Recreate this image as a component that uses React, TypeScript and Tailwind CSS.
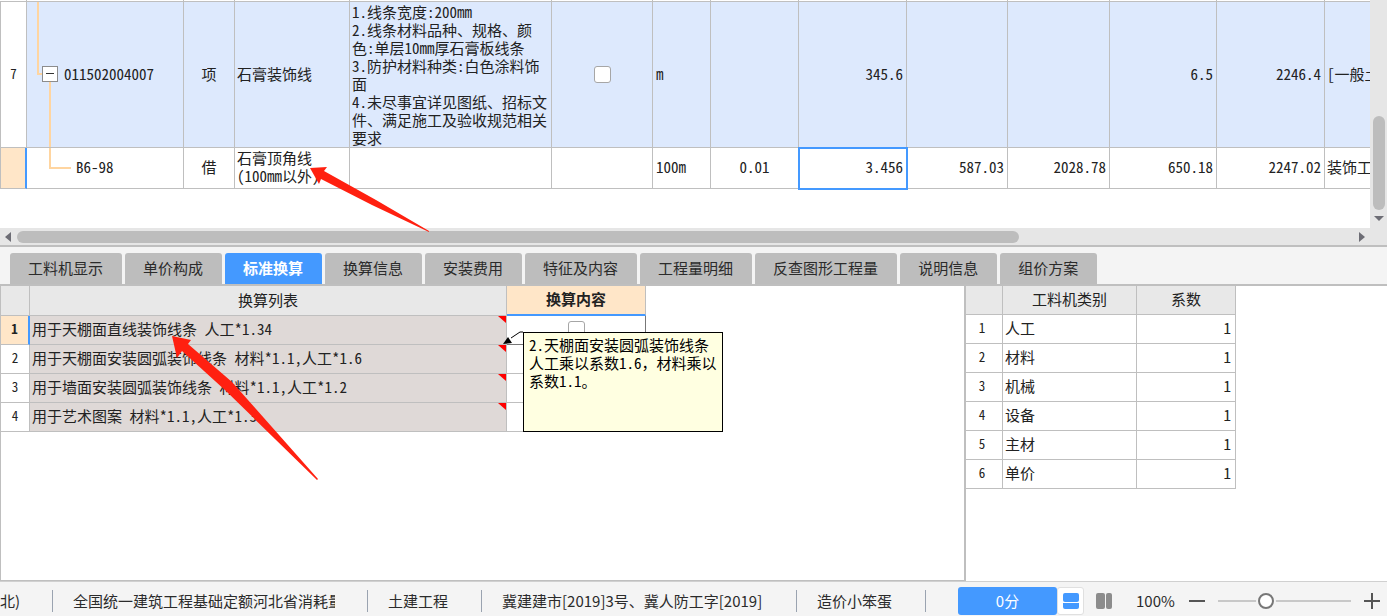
import React from "react";

const GRID_FONT = "font-['Noto_Sans_Mono_CJK_SC','Noto_Sans_CJK_SC',monospace]";
const UI_FONT = "font-['Noto_Sans_CJK_SC',sans-serif]";

const description = [
  "1.线条宽度:200mm",
  "2.线条材料品种、规格、颜",
  "色:单层10mm厚石膏板线条",
  "3.防护材料种类:白色涂料饰",
  "面",
  "4.未尽事宜详见图纸、招标文",
  "件、满足施工及验收规范相关",
  "要求",
];

const columnWidths = [27, 157, 51, 115, 202, 101, 58, 88, 108, 101, 102, 107, 108, 120];

const tabs = [
  "工料机显示",
  "单价构成",
  "标准换算",
  "换算信息",
  "安装费用",
  "特征及内容",
  "工程量明细",
  "反查图形工程量",
  "说明信息",
  "组价方案",
];

const conversions = [
  "用于天棚面直线装饰线条 人工*1.34",
  "用于天棚面安装圆弧装饰线条 材料*1.1,人工*1.6",
  "用于墙面安装圆弧装饰线条 材料*1.1,人工*1.2",
  "用于艺术图案 材料*1.1,人工*1.3",
];

const categories = ["人工", "材料", "机械", "设备", "主材", "单价"];

const frame = "border-b border-r border-[#bfbfbf] p-0";
const cell = `${frame} pb-[2px]`;

const QuotaTable: React.FC = () => (
  <table className="w-max table-fixed border-separate border-spacing-0">
    <colgroup>
      {columnWidths.map((width, index) => (
        <col key={index} style={{ width }} />
      ))}
    </colgroup>
    <tbody>
      <tr className="h-[2px]">
        {columnWidths.map((_, index) => (
          <td key={index} className={frame} />
        ))}
      </tr>
      <tr className="h-[146px] bg-[#dde9fd]">
        <td className={`${cell} border-l bg-white text-center text-[13px]`}>7</td>
        <td className={`${cell} relative`}>
          <svg className="absolute left-0 top-0 h-full w-12" fill="none" stroke="#ffd5a0" strokeWidth="2">
            <path d="M11 0V72H16M23 80V146" />
          </svg>
          <div className="relative flex items-center pl-[15px]">
            <button
              type="button"
              aria-label="折叠"
              className="flex size-4 items-center justify-center border border-[#8c8c8c] bg-white"
            >
              <span className="h-px w-2 bg-[#333]" />
            </button>
            <span className="pl-[6px]">011502004007</span>
          </div>
        </td>
        <td className={`${cell} text-center`}>项</td>
        <td className={`${cell} pl-[2px]`}>石膏装饰线</td>
        <td className={`${frame} pl-[2px]`}>
          {description.map((line) => (
            <p key={line}>{line}</p>
          ))}
        </td>
        <td className={`${cell} text-center align-middle`}>
          <input
            type="checkbox"
            aria-label="是否主要清单"
            className="inline-block size-[17px] appearance-none rounded-[3px] border border-[#a6a6a6] bg-white align-middle"
          />
        </td>
        <td className={`${cell} pl-[3px]`}>m</td>
        <td className={cell} />
        <td className={`${cell} pr-[3px] text-right`}>345.6</td>
        <td className={cell} />
        <td className={cell} />
        <td className={`${cell} pr-[3px] text-right`}>6.5</td>
        <td className={`${cell} pr-[3px] text-right`}>2246.4</td>
        <td className={`${cell} pl-[2px]`}>[一般土建</td>
      </tr>
      <tr className="h-[41px] bg-white">
        <td className={`${cell} border-l border-r-2 border-r-[#4499ff] bg-[#ffe6c8]`} />
        <td className={`${cell} relative`}>
          <svg className="absolute left-0 top-0 h-full w-12" fill="none" stroke="#ffd5a0" strokeWidth="2">
            <path d="M23 0V20H44" />
          </svg>
          <span className="relative pl-[49px]">B6-98</span>
        </td>
        <td className={`${cell} text-center`}>借</td>
        <td className={`${cell} pl-[2px]`}>
          <p>石膏顶角线</p>
          <p>(100mm以外)</p>
        </td>
        <td className={cell} />
        <td className={cell} />
        <td className={`${cell} pl-[3px]`}>100m</td>
        <td className={`${cell} text-center`}>0.01</td>
        <td className={`${cell} pr-[3px] text-right outline-2 -outline-offset-1 outline-[#4499ff]`}>3.456</td>
        <td className={`${cell} pr-[3px] text-right`}>587.03</td>
        <td className={`${cell} pr-[3px] text-right`}>2028.78</td>
        <td className={`${cell} pr-[3px] text-right`}>650.18</td>
        <td className={`${cell} pr-[3px] text-right`}>2247.02</td>
        <td className={`${cell} pl-[2px]`}>装饰工程</td>
      </tr>
    </tbody>
  </table>
);

const TopPane: React.FC = () => (
  <section className="flex shrink-0 border-b-2 border-[#bfbfbf]">
    <div className="flex min-w-0 flex-1 flex-col">
      <div className="h-[228px] overflow-hidden bg-white">
        <QuotaTable />
      </div>
      <div className="flex h-[17px] items-center bg-[#e6e6e6] px-[5px]">
        <svg width="6" height="10" viewBox="0 0 6 10" fill="#6d6d75">
          <path d="M6 0V10L0 5Z" />
        </svg>
        <div className="mx-[6px] flex-1">
          <div className="h-3 w-[75%] rounded-full bg-[#bdbdbd]" />
        </div>
        <svg width="6" height="10" viewBox="0 0 6 10" fill="#6d6d75">
          <path d="M0 0V10L6 5Z" />
        </svg>
      </div>
    </div>
    <div className="flex w-[17px] flex-col items-center justify-end bg-[#e6e6e6] pb-6">
      <div className="h-[94px] w-3 rounded-full bg-[#bdbdbd]" />
      <svg className="mt-[6px]" width="10" height="5" viewBox="0 0 10 5" fill="#6d6d75">
        <path d="M0 0H10L5 5Z" />
      </svg>
    </div>
  </section>
);

const Tabs: React.FC = () => (
  <div role="tablist" className={`flex gap-[3px] bg-[#f4f4f4] pl-[10px] pt-[6px] text-[15px] ${UI_FONT}`}>
    {tabs.map((tab) => {
      const active = tab === "标准换算";
      return (
        <button
          key={tab}
          type="button"
          role="tab"
          aria-selected={active}
          className={`h-[31px] whitespace-nowrap rounded-t-[3px] pb-[2px] pl-[18px] pr-[19px] ${
            active ? "bg-[#4499ff] font-bold text-white" : "bg-[#bdbdbd] text-[#2b2b2b]"
          }`}
        >
          {tab}
        </button>
      );
    })}
  </div>
);

const Note: React.FC = () => (
  <>
    <svg className="absolute left-[-4px] top-[15px] z-10" width="22" height="14" viewBox="0 0 22 14">
      <path d="M20 1H17L8 7" fill="none" stroke="#000" />
      <path d="M0 13L5 6L9 12Z" fill="#000" />
    </svg>
    <div className="absolute left-4 top-4 z-10 h-[100px] w-[200px] border border-black bg-[#ffffe1] px-[5px] py-[3px] text-left text-black">
      <p>2.天棚面安装圆弧装饰线条</p>
      <p>人工乘以系数1.6，材料乘以</p>
      <p>系数1.1。</p>
    </div>
  </>
);

const ConversionTable: React.FC = () => (
  <table className="w-[645px] table-fixed border-separate border-spacing-0">
    <colgroup>
      <col className="w-[29px]" />
      <col className="w-[477px]" />
      <col className="w-[139px]" />
    </colgroup>
    <thead>
      <tr className="h-[30px] bg-[#e8e8e8]">
        <th aria-label="序号" className={cell} />
        <th className={`${cell} font-normal`}>换算列表</th>
        <th className={`${cell} border-b-2 border-b-[#4499ff] bg-[#ffe6c8] font-bold`}>换算内容</th>
      </tr>
    </thead>
    <tbody>
      {conversions.map((text, index) => (
        <tr key={text} className="h-[29px]">
          <td
            className={`${cell} text-center ${
              index === 0 ? "border-r-2 border-r-[#4499ff] bg-[#ffe6c8] font-bold" : "bg-white"
            } text-[13px]`}
          >
            {index + 1}
          </td>
          <td className={`${cell} relative bg-[#dfd9d7] pl-[2px]`}>
            {text}
            <svg className="absolute right-0 top-0" width="8" height="7" viewBox="0 0 8 7" fill="#f00">
              <path d="M0 0H8V7Z" />
            </svg>
          </td>
          <td className={`${cell} relative text-center align-top ${index === 0 ? "border-r-[#777] border-b-[#777]" : ""}`}>
            {index === 0 && (
              <>
                <input
                  type="checkbox"
                  aria-label="换算内容"
                  className="mt-[5px] inline-block size-[17px] appearance-none rounded-[3px] border border-[#a6a6a6] bg-white align-top"
                />
                <Note />
              </>
            )}
          </td>
        </tr>
      ))}
    </tbody>
  </table>
);

const CategoryTable: React.FC = () => (
  <table className="w-[270px] table-fixed border-separate border-spacing-0">
    <colgroup>
      <col className="w-[37px]" />
      <col className="w-[134px]" />
      <col className="w-[99px]" />
    </colgroup>
    <thead>
      <tr className="h-[29px] bg-[#e8e8e8]">
        <th aria-label="序号" className={cell} />
        <th className={`${cell} font-normal`}>工料机类别</th>
        <th className={`${cell} font-normal`}>系数</th>
      </tr>
    </thead>
    <tbody>
      {categories.map((name, index) => (
        <tr key={name} className="h-[29px]">
          <td className={`${cell} pr-1 text-center text-[13px]`}>{index + 1}</td>
          <td className={`${cell} pl-[2px]`}>{name}</td>
          <td className={`${cell} pr-1 text-right`}>1</td>
        </tr>
      ))}
    </tbody>
  </table>
);

const Divider: React.FC = () => <span className="h-[22px] w-px shrink-0 bg-[#9aa3b0]" />;

const StatusBar: React.FC = () => (
  <footer
    className={`flex h-[35px] shrink-0 items-center overflow-hidden whitespace-nowrap border-t border-[#d0d0d0] bg-[#f4f4f4] pt-[3px] pr-[7px] text-[15px] text-[#2b2b2b] ${UI_FONT}`}
  >
    <span className="w-[52px] shrink-0">北)</span>
    <Divider />
    <span className="ml-[20px] mr-[32px] w-[262px] shrink-0 overflow-hidden">全国统一建筑工程基础定额河北省消耗量定额</span>
    <Divider />
    <span className="ml-[20px] mr-[33px]">土建工程</span>
    <Divider />
    <span className="ml-[20px] mr-[32px] w-[262px] shrink-0 overflow-hidden">冀建建市[2019]3号、冀人防工字[2019]</span>
    <Divider />
    <span className="ml-[20px] mr-[33px]">造价小笨蛋</span>
    <Divider />
    <div className="ml-auto flex items-center">
      <button type="button" className="h-7 w-[99px] rounded-[3px] bg-[#4499ff] text-white">
        0分
      </button>
      <button
        type="button"
        aria-label="上下布局"
        className="mr-3 flex h-7 w-[27px] items-center justify-center rounded-[3px] border border-[#e0e0e0] bg-white"
      >
        <svg width="16" height="16" viewBox="0 0 16 16" fill="#4499ff">
          <rect width="16" height="9" rx="2" />
          <path d="M0 10H16V14Q16 16 14 16H2Q0 16 0 14Z" />
        </svg>
      </button>
      <button type="button" aria-label="左右布局" className="mr-[24px]">
        <svg width="16" height="16" viewBox="0 0 16 16" fill="#8c8c8c">
          <rect width="9" height="16" rx="2" />
          <rect x="10" width="6" height="16" rx="2" />
        </svg>
      </button>
      <span className="w-[53px]">100%</span>
      <button type="button" aria-label="缩小">
        <svg width="16" height="16" viewBox="0 0 16 16" stroke="#555" strokeWidth="2">
          <path d="M0 8H16" />
        </svg>
      </button>
      <input
        type="range"
        aria-label="缩放"
        defaultValue={34}
        className="mx-[13px] h-4 w-[133px] appearance-none bg-[linear-gradient(#c8c8c8,#c8c8c8)] bg-[length:100%_2px] bg-center bg-no-repeat [&::-webkit-slider-thumb]:size-4 [&::-webkit-slider-thumb]:appearance-none [&::-webkit-slider-thumb]:rounded-full [&::-webkit-slider-thumb]:border-2 [&::-webkit-slider-thumb]:border-[#777] [&::-webkit-slider-thumb]:bg-white [&::-webkit-slider-thumb]:shadow-[0_0_0_2px_#f4f4f4]"
      />
      <button type="button" aria-label="放大">
        <svg width="16" height="16" viewBox="0 0 16 16" stroke="#555" strokeWidth="2">
          <path d="M0 8H16M8 0V16" />
        </svg>
      </button>
    </div>
  </footer>
);

const Arrows: React.FC = () => (
  <svg
    className="pointer-events-none absolute left-[170px] top-[165px] z-20"
    width="262"
    height="318"
    viewBox="170 165 262 318"
    fill="#ff2010"
  >
    <path d="M310 168L327 167L324 171L376 200L429 231L429 232L372 205L321 179L319 184Z" />
    <path d="M172 336L191 340L188 344L232 382L318 479L317 480L226 391L182 351L177 358Z" />
  </svg>
);

const App: React.FC = () => {
  return (
    <main
      className={`relative flex h-screen flex-col overflow-hidden bg-white text-[15px] leading-[18px] text-[#222] ${GRID_FONT}`}
    >
      <TopPane />
      <Tabs />
      <section className="flex min-h-0 flex-1 border-t-2 border-[#bfbfbf]">
        <div className="w-[966px] border-b border-l border-r-2 border-[#bfbfbf]">
          <ConversionTable />
        </div>
        <div className="flex-1">
          <CategoryTable />
        </div>
      </section>
      <StatusBar />
      <Arrows />
    </main>
  );
};

export default App;
